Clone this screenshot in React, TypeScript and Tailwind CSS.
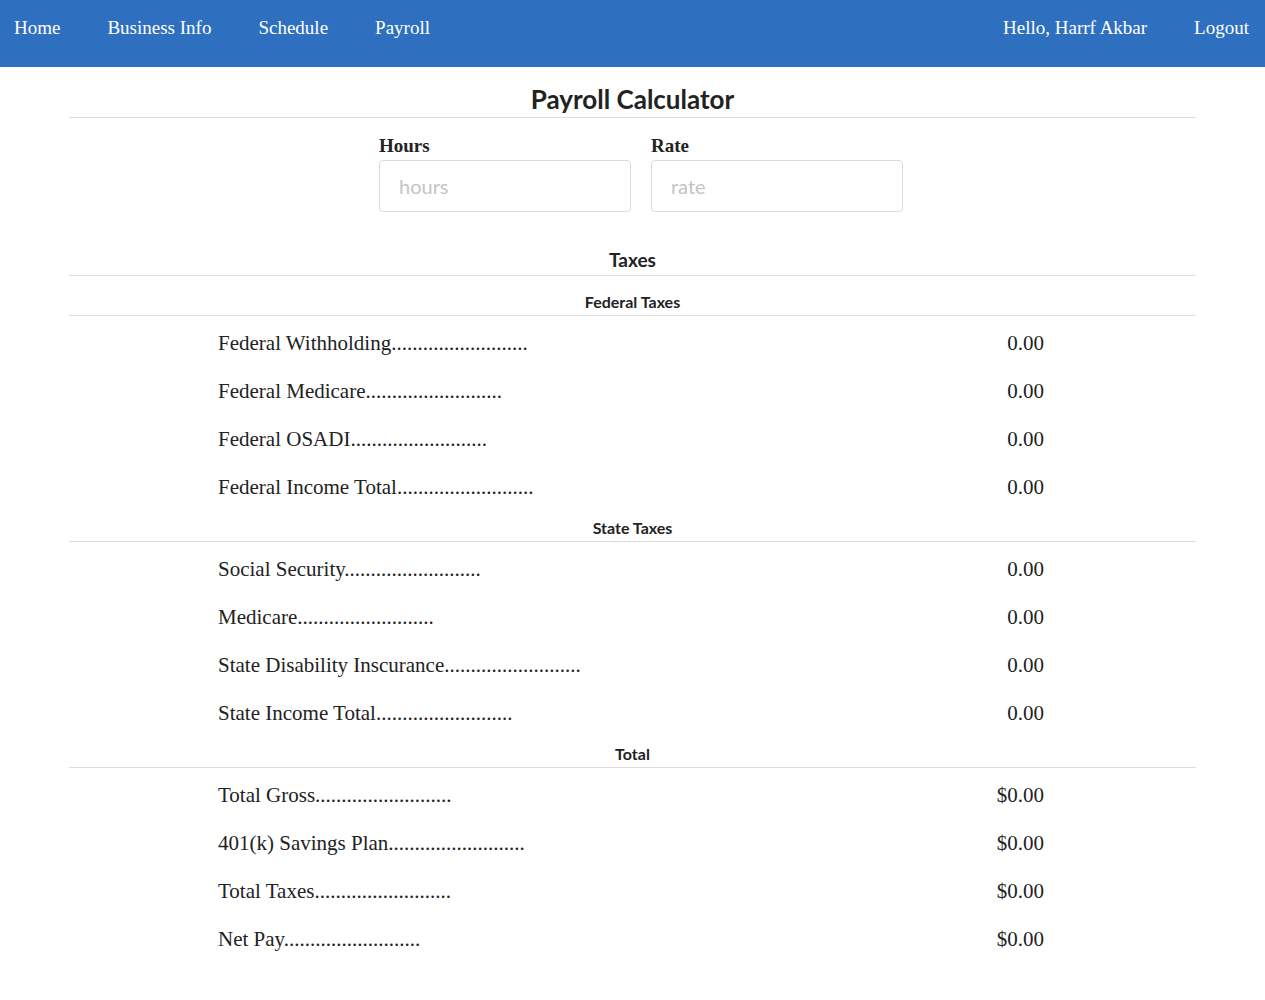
import React, { useState } from 'react'

const serif = "font-['Liberation_Serif','Times_New_Roman',serif]"
const lato = "font-['Lato','Noto_Sans',sans-serif]"

type Row = { label: string; value: string }

const sections: { title: string; rows: Row[] }[] = [
  {
    title: 'Federal Taxes',
    rows: [
      { label: 'Federal Withholding', value: '0.00' },
      { label: 'Federal Medicare', value: '0.00' },
      { label: 'Federal OSADI', value: '0.00' },
      { label: 'Federal Income Total', value: '0.00' },
    ],
  },
  {
    title: 'State Taxes',
    rows: [
      { label: 'Social Security', value: '0.00' },
      { label: 'Medicare', value: '0.00' },
      { label: 'State Disability Inscurance', value: '0.00' },
      { label: 'State Income Total', value: '0.00' },
    ],
  },
  {
    title: 'Total',
    rows: [
      { label: 'Total Gross', value: '$0.00' },
      { label: '401(k) Savings Plan', value: '$0.00' },
      { label: 'Total Taxes', value: '$0.00' },
      { label: 'Net Pay', value: '$0.00' },
    ],
  },
]

const DOTS = '..........................'

const NavBar = () => (
  <nav
    className={`flex h-[67px] items-start justify-between bg-[#2e70bf] pt-[17px] text-[19px] leading-[22px] text-white ${serif}`}
  >
    <div className="flex gap-[47px] pl-[14px]">
      <a href="#">Home</a>
      <a href="#">Business Info</a>
      <a href="#">Schedule</a>
      <a href="#">Payroll</a>
    </div>
    <div className="flex gap-[47px] pr-[16px]">
      <span>Hello, Harrf Akbar</span>
      <a href="#">Logout</a>
    </div>
  </nav>
)

const Field = ({
  label,
  placeholder,
  value,
  onChange,
}: {
  label: string
  placeholder: string
  value: string
  onChange: (v: string) => void
}) => (
  <label className="flex w-[252px] flex-col gap-[3px]">
    <span className={`text-[19px] font-bold leading-[22px] text-[#222] ${serif}`}>
      {label}
    </span>
    <input
      value={value}
      onChange={(e) => onChange(e.target.value)}
      placeholder={placeholder}
      className={`h-[52px] w-full rounded-[4px] border border-[#dcdcdc] px-[19px] text-[20px] text-[#333] outline-none placeholder:text-[#c4c4c4] ${lato}`}
    />
  </label>
)

export default function App() {
  const [hours, setHours] = useState('')
  const [rate, setRate] = useState('')

  return (
    <div className="min-h-screen bg-white text-[#222]">
      <NavBar />
      <main className="mx-[69px]">
        <h1
          className={`border-b border-[#dddddd] pt-[17px] pb-[3px] text-center text-[26px] font-bold leading-[30px] ${lato}`}
        >
          Payroll Calculator
        </h1>

        <div className="mt-[17px] flex justify-center gap-[20px] pl-[17px]">
          <Field label="Hours" placeholder="hours" value={hours} onChange={setHours} />
          <Field label="Rate" placeholder="rate" value={rate} onChange={setRate} />
        </div>

        <h2
          className={`mt-[36px] border-b border-[#dddddd] pb-[3px] text-center text-[19px] font-bold leading-[24px] ${lato}`}
        >
          Taxes
        </h2>

        <div className="mt-[10px]">
          {sections.map((section) => (
            <section key={section.title}>
              <h3
                className={`border-b border-[#dddddd] pt-[6px] pb-[3px] text-center text-[16px] font-bold leading-[20px] ${lato}`}
              >
                {section.title}
              </h3>
              <div className={`pt-[4px] text-[21px] text-[#222] ${serif}`}>
                {section.rows.map((row) => (
                  <div
                    key={row.label}
                    className="flex h-[48px] items-center justify-between pl-[149px] pr-[152px]"
                  >
                    <span>
                      {row.label}
                      {DOTS}
                    </span>
                    <span>{row.value}</span>
                  </div>
                ))}
              </div>
            </section>
          ))}
        </div>
      </main>
    </div>
  )
}
